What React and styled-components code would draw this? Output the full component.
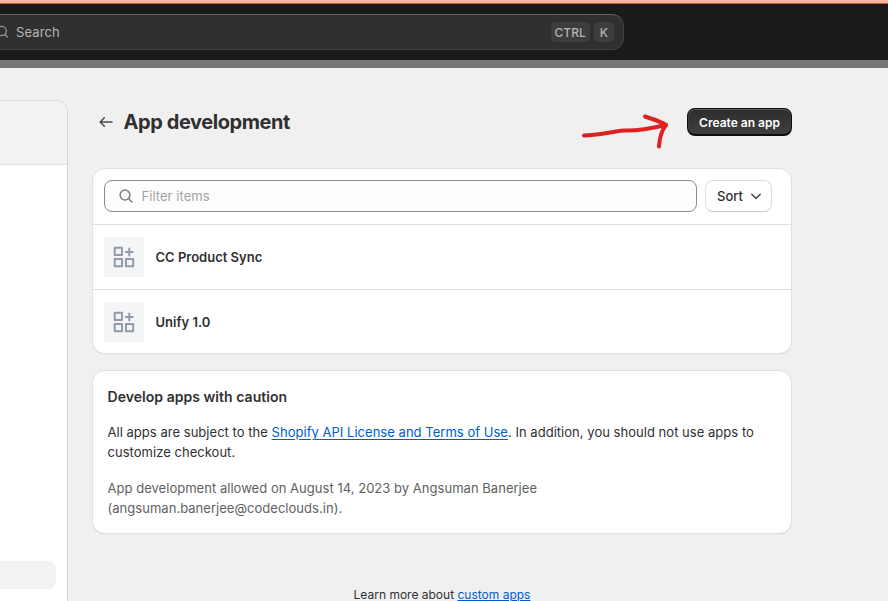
import React from "react";
import styled, { createGlobalStyle } from "styled-components";

const GlobalStyle = createGlobalStyle`
  * { box-sizing: border-box; }
  html, body { margin: 0; padding: 0; overflow: hidden; }
  body { font-family: Inter, sans-serif; font-size: 13px; line-height: 20px; color: #303030; background: #f0f0f0; }
  h1, h2, p { margin: 0; }
  button, input { font: inherit; color: inherit; }
`;

const Page = styled.div`
  display: flex;
  flex-direction: column;
  width: 888px;
  height: 601px;
  overflow: hidden;
  background: #f0f0f0;
`;

const TopBar = styled.header`
  flex: none;
  height: 68px;
  padding-top: 11px;
  background: #1a1a1a;
  border-top: 3px solid #ffb59b;
  border-bottom: 8px solid #777777;
  box-shadow: inset 0 1px 0 #c4602f;
`;

const SearchBar = styled.div`
  display: flex;
  align-items: center;
  width: 624px;
  height: 36px;
  padding-right: 9px;
  background: #303030;
  border: 1px solid #424242;
  border-top-color: #616161;
  border-left: 0;
  border-radius: 0 12px 12px 0;
  color: #b5b5b5;
`;

const SearchLabel = styled.span`
  flex: 1;
  margin-left: 7px;
  letter-spacing: 0.1px;
`;

const Key = styled.kbd`
  height: 20px;
  margin-left: 4px;
  padding: 0 ${(p) => p.$pad}px;
  border-radius: 4px;
  background: #3d3d3d;
  font: 500 12px/21px Inter, sans-serif;
`;

const Body = styled.div`
  display: flex;
  flex: 1;
  min-height: 0;
`;

const Sidebar = styled.aside`
  width: 68px;
  margin-top: 32px;
  background: #ffffff;
  border: 1px solid #d6d6d6;
  border-left: 0;
  border-bottom: 0;
  border-radius: 0 12px 0 0;
  overflow: hidden;
`;

const SidebarHead = styled.div`
  height: 64px;
  background: #f2f2f2;
  border-bottom: 1px solid #dedede;
`;

const SidebarItem = styled.div`
  width: 56px;
  height: 28px;
  margin-top: 396px;
  border-radius: 0 8px 8px 0;
  background: #f2f2f2;
`;

const Main = styled.main`
  width: 698px;
  margin-left: 25px;
  padding-top: 40px;
`;

const TitleRow = styled.div`
  display: flex;
  align-items: center;
  height: 28px;
  margin-bottom: 33px;
`;

const BackIcon = styled.svg`
  width: 16px;
  height: 16px;
  margin-left: 5px;
`;

const Title = styled.h1`
  flex: 1;
  margin-left: 9.5px;
  font-size: 20px;
  line-height: 28px;
  font-weight: 650;
  letter-spacing: -0.42px;
`;

const ScribbleArrow = styled.svg`
  width: 92px;
  height: 40px;
  margin: 18px 14px 0 0;
`;

const CreateButton = styled.button`
  width: 105px;
  height: 28px;
  padding: 2px 0 0;
  margin-right: -1px;
  border: 1px solid #0e0e0e;
  border-bottom-width: 2px;
  border-radius: 8px;
  background: linear-gradient(#2c2c2c, #404040);
  box-shadow: inset 0 1px 0 #5f5f5f, inset 1px 0 0 #3c3c3c, inset -1px 0 0 #3c3c3c;
  color: #ffffff;
  font-size: 12px;
  font-weight: 600;
`;

const Card = styled.section`
  border-radius: 12px;
  background: #ffffff;
  box-shadow: 0 0 0 1px #e0e0e0, 0 1px 1px #bcbcbc;
  margin-bottom: 18px;
`;

const Toolbar = styled.div`
  display: flex;
  gap: 8px;
  height: 55px;
  padding: 11px 19px 0 11px;
`;

const FilterField = styled.div`
  display: flex;
  flex: 1;
  align-items: center;
  height: 32px;
  padding-left: 14px;
  border: 1px solid #8a8a8a;
  border-radius: 8px;
  background: #fdfdfd;
`;

const FilterInput = styled.input`
  flex: 1;
  margin-left: 8.5px;
  padding: 0;
  border: 0;
  outline: 0;
  background: transparent;
  letter-spacing: 0.05px;
  &::placeholder { color: #a3a3a3; opacity: 1; }
`;

const SortButton = styled.button`
  display: flex;
  align-items: center;
  justify-content: space-between;
  width: 67px;
  height: 32px;
  padding: 0 9px 0 11px;
  border: 1px solid #dcdcdc;
  border-bottom-color: #cacaca;
  border-radius: 8px;
  background: #ffffff;
  font-weight: 550;
`;

const AppRow = styled.div`
  display: flex;
  align-items: center;
  gap: 11.5px;
  height: ${(p) => p.$height}px;
  padding-left: 11px;
  border-top: 1px solid #dfdfdf;
  font-weight: 600;
`;

const AppThumb = styled.div`
  display: grid;
  place-items: center;
  width: 40px;
  height: 40px;
  background: #f3f5f7;
`;

const Notice = styled(Card)`
  height: 162px;
  padding: 16px 14.5px;
`;

const NoticeTitle = styled.h2`
  margin-bottom: 15px;
  font-size: 14px;
  line-height: 20px;
  font-weight: 600;
  letter-spacing: 0.04px;
`;

const Paragraph = styled.p`
  margin-bottom: 16px;
  color: ${(p) => (p.$subdued ? "#616161" : "#303030")};
  letter-spacing: 0.03px;
`;

const Link = styled.a`
  color: #005bd3;
  text-decoration: underline;
  text-underline-offset: ${(p) => p.$offset || 2}px;
  text-decoration-thickness: 1px;
`;

const Footer = styled.p`
  padding-top: 34px;
  text-align: center;
  font-size: 12px;
`;

const SearchGlyph = ({ size, color }) => (
  <svg width={size} height={size} viewBox="0 0 14 14" fill="none" stroke={color} strokeWidth="1.5" strokeLinecap="round">
    <circle cx="6" cy="6" r="4.9" />
    <path d="M9.7 9.7 13 13" />
  </svg>
);

const EdgeSearch = styled.svg`
  width: 9px;
  height: 14px;
`;

const AppGlyph = () => (
  <svg width="22" height="22" viewBox="0 0 22 22" fill="#eef4fa" stroke="#929ba6" strokeWidth="2" strokeLinejoin="round">
    <rect x="1.7" y="1.7" width="7.3" height="7.3" />
    <rect x="1.7" y="12.9" width="7.3" height="7.3" />
    <rect x="12.9" y="12.9" width="7.3" height="7.3" />
    <path d="M16.3 2.5v7M12.8 6h7" strokeLinecap="round" />
  </svg>
);

const apps = [
  { name: "CC Product Sync", height: 65 },
  { name: "Unify 1.0", height: 64 },
];

export default function App() {
  return (
    <Page>
      <GlobalStyle />
      <TopBar>
        <SearchBar>
          <EdgeSearch viewBox="0 0 9 14" fill="none" stroke="#999999" strokeWidth="1.3" strokeLinecap="round">
            <circle cx="1.7" cy="6" r="4.6" />
            <path d="m5.2 9.5 2.2 2.6" />
          </EdgeSearch>
          <SearchLabel>Search</SearchLabel>
          <Key $pad={4}>CTRL</Key>
          <Key $pad={6}>K</Key>
        </SearchBar>
      </TopBar>
      <Body>
        <Sidebar>
          <SidebarHead />
          <SidebarItem />
        </Sidebar>
        <Main>
          <TitleRow>
            <BackIcon viewBox="0 0 16 16" fill="none" stroke="#4a4a4a" strokeWidth="1.5" strokeLinecap="round" strokeLinejoin="round">
              <path d="M14 8H2.5M6.3 3.8 2.2 8l4.1 4.2" />
            </BackIcon>
            <Title>App development</Title>
            <ScribbleArrow viewBox="0 0 92 40" fill="none" stroke="#df2020" strokeWidth="4" strokeLinecap="round" strokeLinejoin="round">
              <path d="M3 24.5C16 24.5 29 21 43 19.5C55 20 70 17.5 85 14" />
              <path d="M64 5.5C71 8 79 10 85 14C80 20 78.5 27 78 35.5" />
            </ScribbleArrow>
            <CreateButton>Create an app</CreateButton>
          </TitleRow>
          <Card>
            <Toolbar>
              <FilterField>
                <SearchGlyph size={14} color="#7d7d7d" />
                <FilterInput placeholder="Filter items" />
              </FilterField>
              <SortButton>
                Sort
                <svg width="12" height="12" viewBox="0 0 12 12" fill="none" stroke="#4a4a4a" strokeWidth="1.6" strokeLinecap="round" strokeLinejoin="round">
                  <path d="m1.8 4.3 4.2 4.2 4.2-4.2" />
                </svg>
              </SortButton>
            </Toolbar>
            {apps.map((app) => (
              <AppRow key={app.name} $height={app.height}>
                <AppThumb><AppGlyph /></AppThumb>
                {app.name}
              </AppRow>
            ))}
          </Card>
          <Notice>
            <NoticeTitle>Develop apps with caution</NoticeTitle>
            <Paragraph>
              All apps are subject to the <Link>Shopify API License and Terms of Use</Link>. In addition, you should not use apps to<br />
              customize checkout.
            </Paragraph>
            <Paragraph $subdued>
              App development allowed on August 14, 2023 by Angsuman Banerjee<br />
              (angsuman.banerjee@codeclouds.in).
            </Paragraph>
          </Notice>
          <Footer>Learn more about <Link $offset={1}>custom apps</Link></Footer>
        </Main>
      </Body>
    </Page>
  );
}
